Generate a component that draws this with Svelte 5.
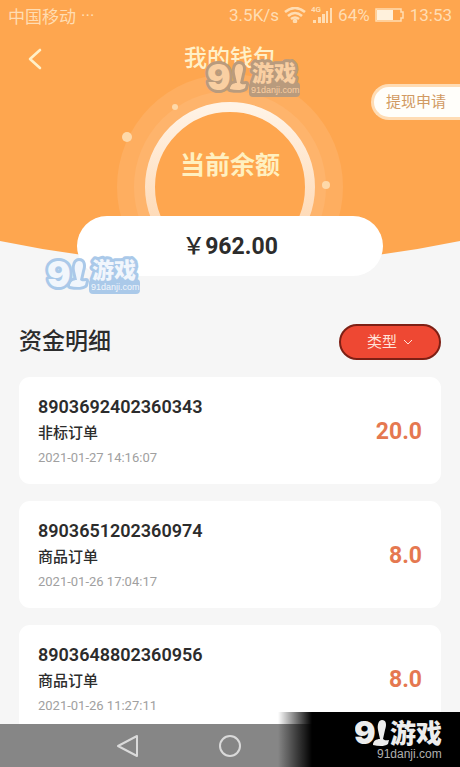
<script lang="ts">
  type Order = {id: string; kind: string; time: string; amount: string};

  const orders: Order[] = [
    {id: "8903692402360343", kind: "非标订单", time: "2021-01-27 14:16:07", amount: "20.0"},
    {id: "8903651202360974", kind: "商品订单", time: "2021-01-26 17:04:17", amount: "8.0"},
    {id: "8903648802360956", kind: "商品订单", time: "2021-01-26 11:27:11", amount: "8.0"},
  ];
</script>

{#snippet brush()}
  <path d="M9 -2C13 -2 14 2 12 8L10 17C12 19 14 18 16 18L15 22C11 25 5 24 0 23C0 19 3 17 7 17L5 8C4 2 6 -2 9 -2Z" />
{/snippet}

{#snippet badge(tone: string)}
  <svg class="badge {tone}" viewBox="0 0 96 42" aria-hidden="true">
    <rect class="plate" x="44" y="25" width="51" height="15" rx="4" />
    <g transform="translate(25 9)">{@render brush()}</g>
    <text class="nine" x="2" y="33">9</text>
    <text class="brand" x="47" y="24">游戏</text>
    <text class="site" x="46" y="36">91danji.com</text>
  </svg>
{/snippet}

<div class="screen">
  <div class="content">
    <section class="hero">
      <svg class="backdrop" viewBox="0 0 460 270" preserveAspectRatio="none" aria-hidden="true">
        <path d="M0 0H460V241Q230 289 0 241Z" fill="#fea64f" />
      </svg>
      <svg class="rings" viewBox="0 0 240 170" aria-hidden="true">
        <defs>
          <linearGradient id="ring" x1="0" y1="0" x2="0" y2="1">
            <stop offset="0" stop-color="#fff3e6" />
            <stop offset="0.75" stop-color="#fed9b5" />
          </linearGradient>
        </defs>
        <circle cx="120" cy="117" r="113" fill="#feae60" />
        <circle cx="120" cy="117" r="96" fill="#feb46c" />
        <circle cx="120" cy="117" r="80" fill="#fea64f" stroke="url(#ring)" stroke-width="10" />
        <circle cx="17" cy="67" r="5" fill="#fed9a9" />
        <circle cx="65" cy="37" r="3" fill="#fed9a9" />
        <circle cx="216" cy="115" r="4" fill="#fed9a9" />
      </svg>

      <div class="status">
        <span>中国移动</span>
        <span>···</span>
        <span class="speed">3.5K/s</span>
        <svg width="22" height="16" viewBox="0 0 22 16" fill="none" stroke="currentColor" stroke-width="2.6" aria-hidden="true">
          <path d="M1 5Q11 -3 21 5M4 9Q11 3 18 9M7 12Q11 9 15 12" />
          <circle cx="11" cy="14" r="1" />
        </svg>
        <svg class="signal" width="22" height="20" viewBox="0 0 22 20" fill="currentColor" aria-hidden="true">
          <text x="0" y="7">4G</text>
          <path d="M2 15h3v3h-3zM7 12h3v6h-3zM11 9h3v9h-3zM15 6h2v12h-2zM19 3h2v15h-2z" />
        </svg>
        <span>64%</span>
        <svg width="30" height="14" viewBox="0 0 30 14" aria-hidden="true">
          <path d="M1 1H26V4H28V10H26V13H1Z" fill="none" stroke="currentColor" stroke-width="1.5" />
          <path d="M2 2H18V12H2Z" fill="#fff1dc" />
        </svg>
        <span>13:53</span>
      </div>

      <header>
        <button class="back" aria-label="返回">
          <svg width="16" height="22" viewBox="0 0 16 22" fill="none" stroke="currentColor" stroke-width="2.6" stroke-linecap="round" stroke-linejoin="round">
            <path d="M13 2L3 11L13 20" />
          </svg>
        </button>
        <h1>我的钱包</h1>
      </header>

      <button class="withdraw">提现申请</button>

      <h2>当前余额</h2>
      <div class="balance"><span class="yen">￥</span>962.00</div>
      <div class="mark low">{@render badge("blue")}</div>
      <div class="mark high">{@render badge("tan")}</div>
    </section>

    <section class="details">
      <div class="heading">
        <h3>资金明细</h3>
        <div class="filter">
          <select aria-label="类型">
            <option>类型</option>
          </select>
          <svg width="10" height="6" viewBox="0 0 10 6" fill="none" stroke="currentColor" aria-hidden="true">
            <path d="M1 1L5 5L9 1" />
          </svg>
        </div>
      </div>

      <ul>
        {#each orders as order}
          <li>
            <div>
              <div class="id">{order.id}</div>
              <div class="kind">{order.kind}</div>
              <time>{order.time}</time>
            </div>
            <span class="amount">{order.amount}</span>
          </li>
        {/each}
      </ul>
    </section>
  </div>

  <nav>
    <button aria-label="后退">
      <svg width="24" height="24" viewBox="0 0 24 24" fill="none" stroke="currentColor" stroke-width="2" stroke-linejoin="round">
        <path d="M21 2V22L2 12Z" />
      </svg>
    </button>
    <button aria-label="主页">
      <svg width="24" height="24" viewBox="0 0 24 24" fill="none" stroke="currentColor" stroke-width="2">
        <circle cx="12" cy="12" r="10" />
      </svg>
    </button>
    <span></span>
  </nav>

  <div class="corner">
    <svg width="90" height="55" viewBox="0 0 90 55" aria-hidden="true">
      <text class="nine" x="-1" y="32">9</text>
      <g transform="translate(18 10)">{@render brush()}</g>
      <text class="brand" x="35" y="31">游戏</text>
      <text class="site" x="22" y="46">91danji.com</text>
    </svg>
  </div>
</div>

<style>
  :global(body) {
    margin: 0;
    background: #f6f6f6;
  }

  .screen {
    position: relative;
    display: flex;
    flex-direction: column;
    height: 100vh;
    overflow: hidden;
    font-family: Roboto, "Noto Sans CJK SC", sans-serif;
    color: #2c2c2c;
  }
  .content {
    flex: 1;
    min-height: 0;
    overflow: hidden;
  }

  button, select {
    margin: 0;
    border: 0;
    padding: 0;
    background: none;
    font: inherit;
    color: inherit;
  }
  h1, h2, h3, ul {
    margin: 0;
    padding: 0;
  }

  .hero {
    position: relative;
    display: flex;
    flex-direction: column;
    align-items: center;
  }
  .backdrop {
    position: absolute;
    top: 0;
    left: 0;
    width: 100%;
    height: 270px;
  }
  .rings {
    position: absolute;
    top: 70px;
    left: 50%;
    width: 240px;
    height: 170px;
    transform: translateX(-50%);
  }

  .status {
    position: relative;
    box-sizing: border-box;
    display: flex;
    align-items: center;
    width: 100%;
    height: 30px;
    padding: 0 8px;
    gap: 5px;
    font-size: 17px;
    color: #ffddb3;
  }
  .speed {margin-left: auto}
  .signal text {font: bold 8px Roboto, sans-serif}

  header {
    position: relative;
    display: grid;
    grid-template-columns: 1fr auto 1fr;
    align-items: center;
    width: 100%;
    height: 58px;
    color: #fff0c8;
  }
  .back {
    display: flex;
    justify-self: start;
    margin-left: 27px;
  }
  h1 {
    font-size: 23px;
    font-weight: 500;
    line-height: 32px;
  }

  .withdraw {
    position: relative;
    align-self: flex-end;
    box-sizing: border-box;
    height: 36px;
    margin-top: -4px;
    padding: 0 14px 0 12px;
    border: 3px solid #ffdcb4;
    border-right: 0;
    border-radius: 18px 0 0 18px;
    background: #fffefa;
    font-size: 15px;
    line-height: 30px;
    color: #d19a62;
  }
  h2 {
    position: relative;
    margin-top: 28px;
    font-size: 25px;
    font-weight: 700;
    line-height: 36px;
    color: #fff0c0;
  }
  .balance {
    position: relative;
    box-sizing: border-box;
    width: calc(100% - 154px);
    height: 60px;
    margin-top: 32px;
    border-radius: 30px;
    background: #fff;
    font-size: 23px;
    font-weight: 700;
    line-height: 62px;
    text-align: center;
  }
  .yen {font-weight: 500}

  .mark {
    position: absolute;
    width: 96px;
    height: 42px;
  }
  .low {
    top: 254px;
    left: 45px;
  }
  .high {
    top: 57px;
    left: 205px;
  }
  .badge {
    display: block;
    width: 96px;
    height: 42px;
    overflow: visible;
    stroke-width: 6px;
    stroke-linejoin: round;
    paint-order: stroke;
  }
  .badge .site, .plate {stroke: none}
  .blue {
    fill: #f1f6fc;
    stroke: #aac9e9;
  }
  .tan {
    fill: #f9cfa2;
    stroke: #b99b7d;
  }
  .blue .plate {fill: #aac9e9}
  .tan .plate {fill: #b99b7d}
  .nine {font: 900 35px Inter, sans-serif}
  .brand {font: 900 22px "Noto Sans CJK SC", sans-serif}
  .site {font: 9px "Liberation Sans", sans-serif}

  .details {padding: 48px 19px 0}
  .heading {
    display: flex;
    align-items: center;
    justify-content: space-between;
  }
  h3 {
    font-size: 23px;
    font-weight: 500;
    line-height: 36px;
  }
  .filter {
    position: relative;
    color: #ffe2d8;
  }
  select {
    display: block;
    box-sizing: border-box;
    width: 102px;
    height: 36px;
    padding: 0 26px;
    border: 2px solid #7d2015;
    border-radius: 18px;
    appearance: none;
    background: #ee4833;
    font-size: 15px;
  }
  .filter svg {
    position: absolute;
    top: 15px;
    right: 28px;
    pointer-events: none;
  }

  ul {
    display: grid;
    gap: 17px;
    margin-top: 17px;
    list-style: none;
  }
  li {
    display: flex;
    align-items: center;
    justify-content: space-between;
    padding: 17px 19px 15px;
    border-radius: 11px;
    background: #fff;
  }
  .id {
    font-size: 18px;
    font-weight: 600;
    line-height: 26px;
  }
  .kind {
    font-size: 15px;
    font-weight: 500;
    line-height: 27px;
  }
  time {
    display: block;
    font-size: 13px;
    line-height: 22px;
    color: #a0a0a0;
  }
  .amount {
    font-size: 23px;
    font-weight: 700;
    color: #e57850;
  }

  nav {
    display: grid;
    grid-template-columns: repeat(3, 102px);
    justify-content: center;
    align-items: center;
    height: 43px;
    background: #868686;
    color: #dadada;
  }
  nav button {
    display: flex;
    justify-content: center;
  }

  .corner {
    position: absolute;
    right: 0;
    bottom: 0;
    display: flex;
    justify-content: flex-end;
    box-sizing: border-box;
    width: 182px;
    height: 55px;
    padding-right: 15px;
    background: linear-gradient(90deg, transparent, #000 34px);
  }
  .corner svg {fill: #ededed}
  .corner .nine {font-size: 32px}
  .corner .brand {font-size: 26px}
  .corner .site {
    font-size: 12px;
    fill: #b0b0b0;
  }
</style>
